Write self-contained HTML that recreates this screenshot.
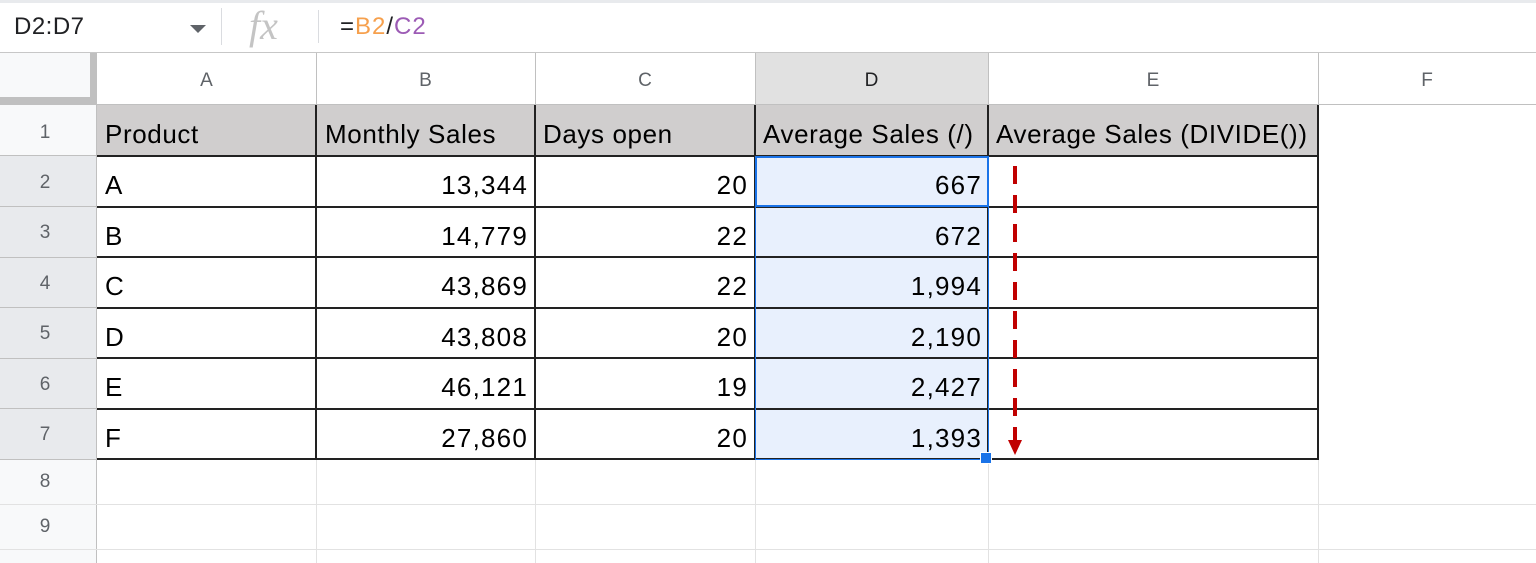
<!DOCTYPE html>
<html><head><style>
body{margin:0;width:1536px;height:563px;overflow:hidden;background:#fff;font-family:"Liberation Sans",sans-serif;position:relative}
div{position:absolute;box-sizing:border-box}
.h{color:#5f6368;font-size:19px;text-align:center}
.c{font-size:26px;letter-spacing:1.2px;color:#000;white-space:nowrap;line-height:1}
.t{letter-spacing:0.6px}
</style></head><body>
<div style="left:0;top:0;width:1536px;height:3px;background:#e8eaed"></div>
<div style="left:0;top:52px;width:1536px;height:1px;background:#c7c7c7"></div>
<div class="c" style="left:14px;top:15px;font-size:24px;letter-spacing:0.5px;color:#202124">D2:D7</div>
<div style="left:190px;top:25px;width:0;height:0;border-left:8px solid transparent;border-right:8px solid transparent;border-top:8px solid #5f6368"></div>
<div style="left:221px;top:8px;width:1px;height:37px;background:#dadce0"></div>
<div style="left:249px;top:2px;font-family:'Liberation Serif',serif;font-style:italic;font-size:40px;color:#c4c4c4">fx</div>
<div style="left:318px;top:10px;width:1px;height:33px;background:#dadce0"></div>
<div class="c" style="left:340px;top:15px;font-size:24px;letter-spacing:1px"><span style="color:#202124">=</span><span style="color:#f6a04d">B2</span><span style="color:#202124">/</span><span style="color:#9c5bb5">C2</span></div>
<div style="left:0;top:53px;width:97px;height:52px;background:#f8f9fa"></div>
<div style="left:90px;top:53px;width:7px;height:52px;background:#c0c0c0"></div>
<div style="left:0;top:97px;width:97px;height:8px;background:#c0c0c0"></div>
<div style="left:755px;top:53px;width:233px;height:52px;background:#e1e1e1"></div>
<div style="left:97px;top:104px;width:1439px;height:1px;background:#c0c0c0"></div>
<div class="h" style="left:97px;top:70px;width:219px">A</div>
<div class="h" style="left:316px;top:70px;width:219px">B</div>
<div class="h" style="left:535px;top:70px;width:220px">C</div>
<div class="h" style="left:755px;top:70px;width:233px;color:#202124">D</div>
<div class="h" style="left:988px;top:70px;width:330px">E</div>
<div class="h" style="left:1318px;top:70px;width:218px">F</div>
<div style="left:316px;top:53px;width:1px;height:52px;background:#c0c0c0"></div>
<div style="left:535px;top:53px;width:1px;height:52px;background:#c0c0c0"></div>
<div style="left:755px;top:53px;width:1px;height:52px;background:#c0c0c0"></div>
<div style="left:988px;top:53px;width:1px;height:52px;background:#c0c0c0"></div>
<div style="left:1318px;top:53px;width:1px;height:52px;background:#c0c0c0"></div>
<div style="left:0;top:105px;width:97px;height:458px;background:#f8f9fa"></div>
<div style="left:0;top:156px;width:97px;height:303px;background:#e8eaed"></div>
<div style="left:96px;top:105px;width:1px;height:458px;background:#c0c0c0"></div>
<div class="h" style="left:0;top:122px;width:90px">1</div>
<div class="h" style="left:0;top:172px;width:90px">2</div>
<div class="h" style="left:0;top:222px;width:90px">3</div>
<div class="h" style="left:0;top:273px;width:90px">4</div>
<div class="h" style="left:0;top:323px;width:90px">5</div>
<div class="h" style="left:0;top:374px;width:90px">6</div>
<div class="h" style="left:0;top:424px;width:90px">7</div>
<div class="h" style="left:0;top:471px;width:90px">8</div>
<div class="h" style="left:0;top:516px;width:90px">9</div>
<div style="left:0;top:206px;width:97px;height:1px;background:#c0c0c0"></div>
<div style="left:0;top:257px;width:97px;height:1px;background:#c0c0c0"></div>
<div style="left:0;top:307px;width:97px;height:1px;background:#c0c0c0"></div>
<div style="left:0;top:358px;width:97px;height:1px;background:#c0c0c0"></div>
<div style="left:0;top:408px;width:97px;height:1px;background:#c0c0c0"></div>
<div style="left:0;top:459px;width:97px;height:1px;background:#c0c0c0"></div>
<div style="left:0;top:504px;width:1536px;height:1px;background:#e2e2e2"></div>
<div style="left:0;top:549px;width:1536px;height:1px;background:#e2e2e2"></div>
<div style="left:0;top:155px;width:97px;height:1px;background:#c0c0c0"></div>
<div style="left:316px;top:459px;width:1px;height:104px;background:#e2e2e2"></div>
<div style="left:535px;top:459px;width:1px;height:104px;background:#e2e2e2"></div>
<div style="left:755px;top:459px;width:1px;height:104px;background:#e2e2e2"></div>
<div style="left:988px;top:459px;width:1px;height:104px;background:#e2e2e2"></div>
<div style="left:1318px;top:105px;width:1px;height:458px;background:#e2e2e2"></div>
<div style="left:97px;top:105px;width:1221px;height:51px;background:#d0cece"></div>
<div style="left:755px;top:156px;width:233px;height:303px;background:#e8f0fd"></div>
<div style="left:97px;top:155px;width:1221px;height:2px;background:#222"></div>
<div style="left:97px;top:206px;width:1221px;height:2px;background:#222"></div>
<div style="left:97px;top:256px;width:1221px;height:2px;background:#222"></div>
<div style="left:97px;top:307px;width:1221px;height:2px;background:#222"></div>
<div style="left:97px;top:357px;width:1221px;height:2px;background:#222"></div>
<div style="left:97px;top:408px;width:1221px;height:2px;background:#222"></div>
<div style="left:97px;top:458px;width:1221px;height:2px;background:#222"></div>
<div style="left:315px;top:105px;width:2px;height:355px;background:#222"></div>
<div style="left:534px;top:105px;width:2px;height:355px;background:#222"></div>
<div style="left:754px;top:105px;width:2px;height:355px;background:#222"></div>
<div style="left:987px;top:105px;width:2px;height:355px;background:#222"></div>
<div style="left:1317px;top:105px;width:2px;height:355px;background:#222"></div>
<div style="left:755px;top:156px;width:234px;height:304px;border:1px solid #1a73e8"></div>
<div style="left:755px;top:156px;width:234px;height:51px;border:2px solid #1a73e8"></div>
<div style="left:980px;top:452px;width:12px;height:12px;background:#1a73e8;border:1px solid #fff"></div>
<div class="c t" style="left:105px;top:121px">Product</div>
<div class="c t" style="left:325px;top:121px">Monthly Sales</div>
<div class="c t" style="left:543px;top:121px">Days open</div>
<div class="c t" style="left:763px;top:121px">Average Sales (/)</div>
<div class="c t" style="left:996px;top:121px">Average Sales (DIVIDE())</div>
<div class="c" style="left:105px;top:172px">A</div>
<div class="c" style="left:105px;top:223px">B</div>
<div class="c" style="left:105px;top:273px">C</div>
<div class="c" style="left:105px;top:324px">D</div>
<div class="c" style="left:105px;top:374px">E</div>
<div class="c" style="left:105px;top:425px">F</div>
<div class="c" style="left:316px;top:172px;width:212px;text-align:right">13,344</div>
<div class="c" style="left:316px;top:223px;width:212px;text-align:right">14,779</div>
<div class="c" style="left:316px;top:273px;width:212px;text-align:right">43,869</div>
<div class="c" style="left:316px;top:324px;width:212px;text-align:right">43,808</div>
<div class="c" style="left:316px;top:374px;width:212px;text-align:right">46,121</div>
<div class="c" style="left:316px;top:425px;width:212px;text-align:right">27,860</div>
<div class="c" style="left:535px;top:172px;width:213px;text-align:right">20</div>
<div class="c" style="left:535px;top:223px;width:213px;text-align:right">22</div>
<div class="c" style="left:535px;top:273px;width:213px;text-align:right">22</div>
<div class="c" style="left:535px;top:324px;width:213px;text-align:right">20</div>
<div class="c" style="left:535px;top:374px;width:213px;text-align:right">19</div>
<div class="c" style="left:535px;top:425px;width:213px;text-align:right">20</div>
<div class="c" style="left:755px;top:172px;width:227px;text-align:right">667</div>
<div class="c" style="left:755px;top:223px;width:227px;text-align:right">672</div>
<div class="c" style="left:755px;top:273px;width:227px;text-align:right">1,994</div>
<div class="c" style="left:755px;top:324px;width:227px;text-align:right">2,190</div>
<div class="c" style="left:755px;top:374px;width:227px;text-align:right">2,427</div>
<div class="c" style="left:755px;top:425px;width:227px;text-align:right">1,393</div>
<svg style="position:absolute;left:1000px;top:160px" width="30" height="300">
<line x1="15" y1="6" x2="15" y2="282" stroke="#c00000" stroke-width="4" stroke-dasharray="18,11"/>
<polygon points="8,280 22,280 15,295" fill="#c00000"/>
</svg>
</body></html>
